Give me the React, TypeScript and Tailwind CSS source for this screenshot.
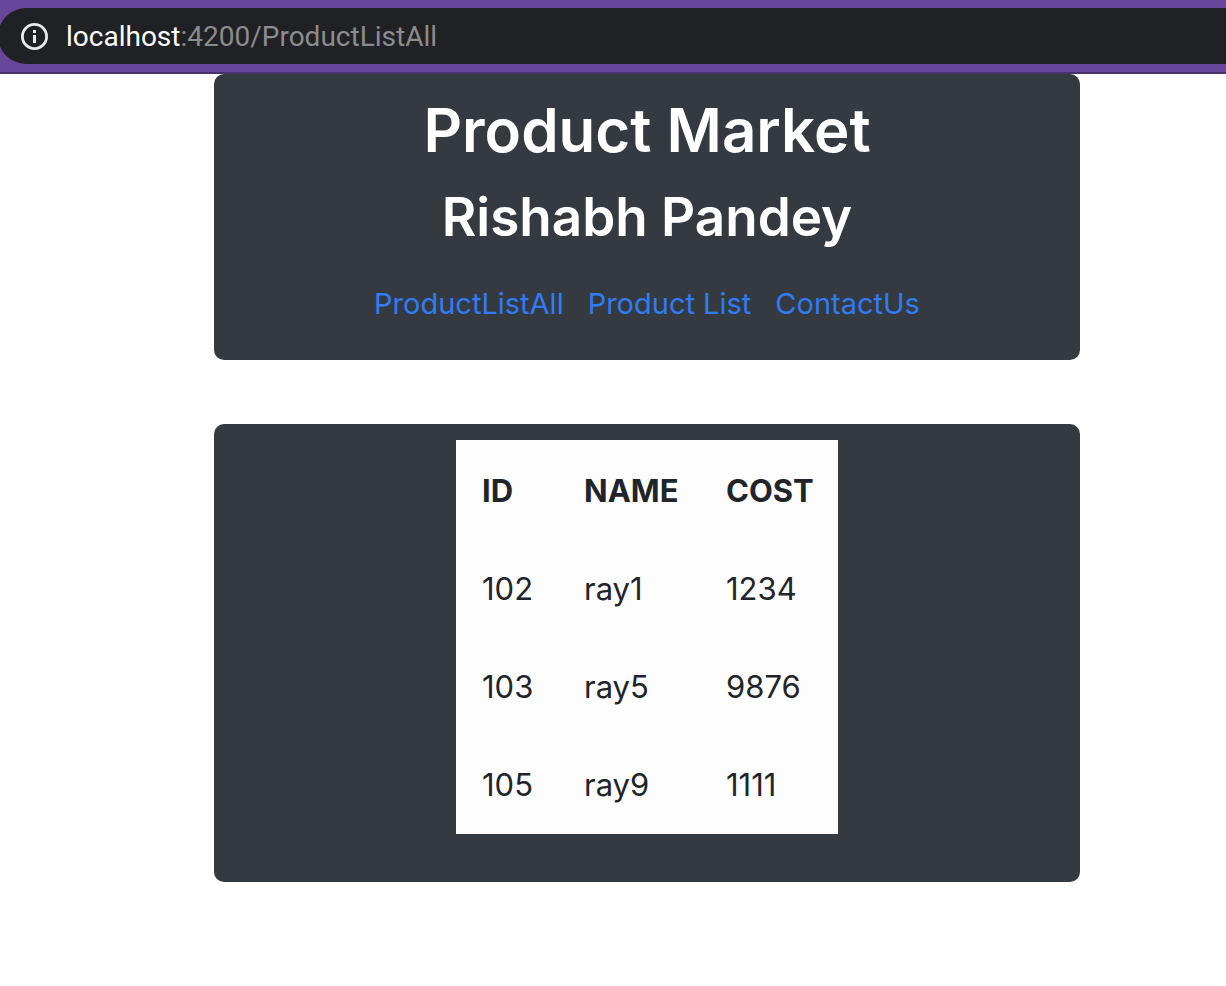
const links = [
  { label: "ProductListAll", href: "/ProductListAll" },
  { label: "Product List", href: "/ProductList" },
  { label: "ContactUs", href: "/ContactUs" },
];

const products = [
  { id: 102, name: "ray1", cost: 1234 },
  { id: 103, name: "ray5", cost: 9876 },
  { id: 105, name: "ray9", cost: 1111 },
];

const cell = "pt-[25px] pr-5 pb-[23px] pl-6";

function InfoIcon() {
  return (
    <svg className="size-7" viewBox="0 0 28 28" fill="none" aria-hidden="true">
      <circle cx="14.5" cy="13.5" r="12.1" stroke="#e8eaed" strokeWidth="2.8" />
      <path d="M13 7h3v3h-3zM13 12h3v8h-3z" fill="#e8eaed" />
    </svg>
  );
}

function AddressBar() {
  return (
    <header className="border-b-2 border-[#48326b] bg-[#67469b] py-2">
      <div className="-ml-0.5 flex h-14 items-center rounded-l-full bg-[#202124] pt-0.5 pl-[22px] text-[28px]">
        <button type="button" aria-label="View site information" className="mr-[18px]">
          <InfoIcon />
        </button>
        <p className="font-[Roboto,sans-serif] text-[#8c8c8e]">
          <span className="text-white">localhost</span>:4200/ProductListAll
        </p>
      </div>
    </header>
  );
}

function ProductTable() {
  return (
    <table className="border-separate border-spacing-[2px] bg-[#fdfdfd] text-left text-[31px] leading-[48px] text-[#212529]">
      <thead>
        <tr>
          <th scope="col" className={`min-w-[100px] font-bold ${cell}`}>ID</th>
          <th scope="col" className={`min-w-[140px] font-bold ${cell}`}>NAME</th>
          <th scope="col" className={`min-w-[134px] font-bold ${cell}`}>COST</th>
        </tr>
      </thead>
      <tbody>
        {products.map((p) => (
          <tr key={p.id}>
            <td className={cell}>{p.id}</td>
            <td className={cell}>{p.name}</td>
            <td className={cell}>{p.cost}</td>
          </tr>
        ))}
      </tbody>
    </table>
  );
}

export default function App() {
  return (
    <div className="min-h-screen bg-white font-[Inter,sans-serif]">
      <AddressBar />
      <main className="flex flex-col gap-16 pr-[146px] pl-[214px]">
        <section className="flex flex-col items-center rounded-[10px] bg-[#353a41] px-4 pt-[18px] pb-8 text-white">
          <h1 className="mb-4 text-[60px] leading-[76px] font-semibold">Product Market</h1>
          <h2 className="mb-[30px] text-[53px] leading-[66px] font-semibold">Rishabh Pandey</h2>
          <nav className="flex gap-6 text-[29px] leading-[48px] text-[#2f7cf6]">
            {links.map((l) => (
              <a key={l.label} href={l.href}>
                {l.label}
              </a>
            ))}
          </nav>
        </section>
        <section className="flex flex-col items-center rounded-[10px] bg-[#353a41] px-4 pt-4 pb-12">
          <ProductTable />
        </section>
      </main>
    </div>
  );
}
